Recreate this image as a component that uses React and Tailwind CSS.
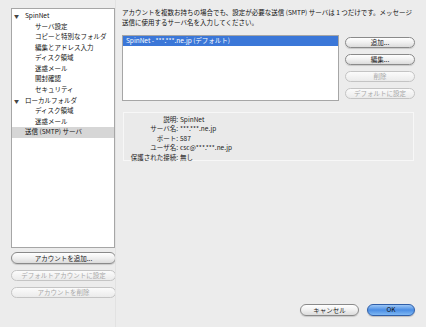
import React from "react";

const font = { fontFamily: '"Lucida Grande", "Noto Sans CJK JP", "Noto Sans", sans-serif' };

function AquaButton({ children, disabled, className = "" }) {
  return (
    <div
      className={
        "flex items-center justify-center rounded-full border text-[6.5px] leading-none " +
        (disabled
          ? "border-[#c4c4c4] text-[#a8a8a8] bg-gradient-to-b from-[#fbfbfb] to-[#ebebeb] "
          : "border-[#8a8a8a] text-[#1a1a1a] bg-gradient-to-b from-[#ffffff] via-[#f0f0f0] to-[#dcdcdc] shadow-[0_1px_1px_rgba(0,0,0,0.15)] ") +
        className
      }
    >
      {children}
    </div>
  );
}

function TreeRow({ children, level = 0, arrow }) {
  return (
    <div className="flex h-[10.6px] items-center text-[6.5px] text-[#111]">
      <div className={level === 0 ? "w-[2px]" : "w-[23px]"} />
      {arrow !== undefined && (
        <span className="w-[11px] text-[5px] text-[#444]">▼</span>
      )}
      <span>{children}</span>
    </div>
  );
}

export default function App() {
  return (
    <div
      className="flex h-[327px] w-[426px] overflow-hidden bg-[#ececec] text-[#111]"
      style={font}
    >
      {/* Left column */}
      <div className="flex w-[115px] shrink-0 flex-col pl-[11px] pt-[8px]">
        <div className="h-[240px] w-[104px] border border-[#a6a6a6] bg-white pt-[1.5px]">
          <TreeRow arrow>SpinNet</TreeRow>
          <TreeRow level={1}>サーバ設定</TreeRow>
          <TreeRow level={1}>コピーと特別なフォルダ</TreeRow>
          <TreeRow level={1}>編集とアドレス入力</TreeRow>
          <TreeRow level={1}>ディスク領域</TreeRow>
          <TreeRow level={1}>迷惑メール</TreeRow>
          <TreeRow level={1}>開封確認</TreeRow>
          <TreeRow level={1}>セキュリティ</TreeRow>
          <TreeRow arrow>ローカルフォルダ</TreeRow>
          <TreeRow level={1}>ディスク領域</TreeRow>
          <TreeRow level={1}>迷惑メール</TreeRow>
          <div className="flex h-[10.6px] items-center bg-[#d6d6d6] pl-[13px] text-[6.5px]">
            送信 (SMTP) サーバ
          </div>
        </div>
        <div className="mt-[4px] flex w-[105px] flex-col gap-[6px]">
          <AquaButton className="h-[12px]">アカウントを追加...</AquaButton>
          <AquaButton disabled className="h-[11px]">デフォルトアカウントに設定</AquaButton>
          <AquaButton disabled className="h-[11px]">アカウントを削除</AquaButton>
        </div>
      </div>

      {/* Right column */}
      <div className="flex flex-1 flex-col border-l border-[#e2e2e2] pl-[6px] pr-[13px] pt-[8px] pb-[11px]">
        <p className="text-[6.5px] leading-[9.5px] text-[#111]">
          アカウントを複数お持ちの場合でも、設定が必要な送信 (SMTP) サーバは 1 つだけです。メッセージ送信に使用するサーバ名を入力してください。
        </p>
        <div className="mt-[8px] flex">
          <div className="h-[66px] w-[217px] shrink-0 border border-[#a6a6a6] bg-white">
            <div className="flex h-[10px] items-center bg-[#3b77d8] pl-[3px] text-[6.5px] text-white">
              SpinNet - ***.***.ne.jp (デフォルト)
            </div>
          </div>
          <div className="ml-[6px] flex w-[70px] flex-col gap-[6px] pt-[2px]">
            <AquaButton className="h-[11px]">追加...</AquaButton>
            <AquaButton className="h-[11px]">編集...</AquaButton>
            <AquaButton disabled className="h-[11px]">削除</AquaButton>
            <AquaButton disabled className="h-[11px]">デフォルトに設定</AquaButton>
          </div>
        </div>
        <div className="ml-[1px] mt-[11px] h-[49px] w-[291px] border border-[#f7f7f7] bg-[#eaeaea] pt-[1.5px]">
          <div className="grid grid-cols-[54px_1fr] gap-x-[2px] text-[6.5px] leading-[9.6px] text-[#222]">
            <span className="text-right">説明:</span>
            <span>SpinNet</span>
            <span className="text-right">サーバ名:</span>
            <span>***.***.ne.jp</span>
            <span className="text-right">ポート:</span>
            <span>587</span>
            <span className="text-right">ユーザ名:</span>
            <span>csc@***.***.ne.jp</span>
            <span className="text-right">保護された接続:</span>
            <span>無し</span>
          </div>
        </div>
        <div className="mt-auto flex justify-end gap-[8px]">
          <AquaButton className="h-[12px] w-[59px]">キャンセル</AquaButton>
          <div className="flex h-[12px] w-[48px] items-center justify-center rounded-full border border-[#2f5ea8] bg-gradient-to-b from-[#9cc6f5] via-[#4a8de4] to-[#7fb8f3] text-[6.5px] text-[#111] shadow-[0_1px_1px_rgba(0,0,0,0.2)]">
            OK
          </div>
        </div>
      </div>
    </div>
  );
}
